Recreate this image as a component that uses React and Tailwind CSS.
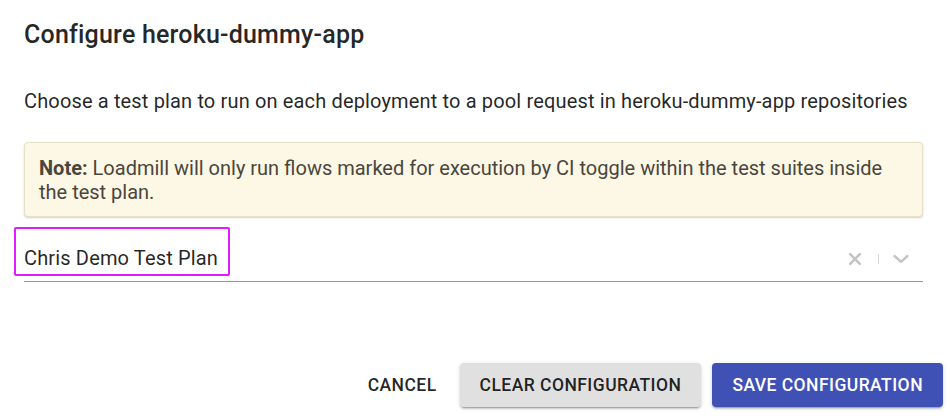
export default function App() {
  return (
    <div className="h-[416px] w-[950px] bg-white font-['Roboto','Liberation_Sans',sans-serif] text-[rgba(0,0,0,0.87)]">
      <div className="flex flex-col pl-6 pr-[27px] pt-[19px]">
        <h2 className="text-[25px] font-medium leading-8 tracking-[0.2px]">Configure heroku-dummy-app</h2>

        <p className="mt-[38px] text-[20px] leading-6 tracking-[0.15px]">
          Choose a test plan to run on each deployment to a pool request in heroku-dummy-app repositories
        </p>

        {/* Note */}
        <div className="mt-[29px] rounded border border-[#e8dfc4] bg-[#fdf7e6] pb-3 pl-[14px] pr-[14px] pt-[13px] text-[20px] leading-6 text-[#4a463c] shadow-[0_1px_2px_rgba(0,0,0,0.18)]">
          <span className="font-bold">Note:</span> Loadmill will only run flows marked for execution by CI toggle within the test suites inside the test plan.
        </div>

        {/* Select */}
        <div className="mt-5 flex h-[45px] items-center border-b border-[#949494]">
          <div className="flex-1">
            <span className="relative text-[20px] leading-6 tracking-[0.15px]">
              Chris Demo Test Plan
              <span className="absolute -bottom-[6px] -left-[10px] -right-[12px] -top-[19px] rounded-[2px] border-2 border-[#e01cff]" />
            </span>
          </div>
          <div className="flex items-center pr-[14px]">
            <svg width="14" height="14" viewBox="0 0 14 14" className="mr-[16px]">
              <path d="M2.2 2.2 L11.8 11.8 M11.8 2.2 L2.2 11.8" stroke="#c4c4c4" strokeWidth="2.6" strokeLinecap="round" />
            </svg>
            <span className="h-[10px] w-px bg-[#d8d8d8]" />
            <svg width="16" height="16" viewBox="0 0 16 16" className="ml-[14px]">
              <path d="M1.6 5 L8 10.8 L14.4 5" stroke="#c4c4c4" strokeWidth="2.4" fill="none" strokeLinecap="round" strokeLinejoin="round" />
            </svg>
          </div>
        </div>
      </div>

      {/* Actions */}
      <div className="mt-[81px] flex items-center justify-end gap-[11px] pr-[7px]">
        <button className="mr-[2px] h-[44px] px-[10px] text-[17.5px] font-medium uppercase tracking-[0.45px] text-[rgba(0,0,0,0.87)]">
          Cancel
        </button>
        <button className="h-[44px] rounded bg-[#e0e0e0] px-5 text-[17.5px] font-medium uppercase tracking-[0.45px] text-[rgba(0,0,0,0.87)] shadow-[0_3px_1px_-2px_rgba(0,0,0,0.2),0_2px_2px_0_rgba(0,0,0,0.14),0_1px_5px_0_rgba(0,0,0,0.12)]">
          Clear Configuration
        </button>
        <button className="h-[44px] rounded bg-[#3f51b5] px-5 text-[17.5px] font-medium uppercase tracking-[0.45px] text-white shadow-[0_3px_1px_-2px_rgba(0,0,0,0.2),0_2px_2px_0_rgba(0,0,0,0.14),0_1px_5px_0_rgba(0,0,0,0.12)]">
          Save Configuration
        </button>
      </div>
    </div>
  )
}
